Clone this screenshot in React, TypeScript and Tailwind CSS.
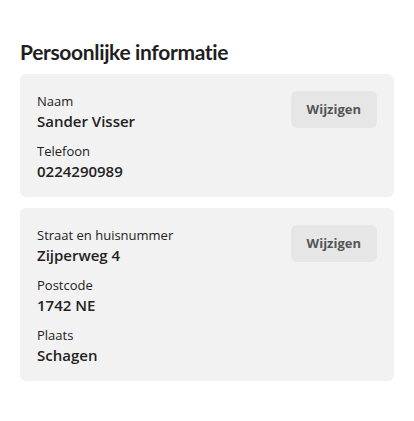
const fields1 = [
  { label: "Naam", value: "Sander Visser" },
  { label: "Telefoon", value: "0224290989" },
];

const fields2 = [
  { label: "Straat en huisnummer", value: "Zijperweg 4" },
  { label: "Postcode", value: "1742 NE" },
  { label: "Plaats", value: "Schagen" },
];

function InfoCard({ fields }: { fields: { label: string; value: string }[] }) {
  return (
    <div className="flex items-start justify-between rounded-md bg-[#f2f2f2] pt-[17px] pr-[17px] pb-[16px] pl-[17px]">
      <div className="flex flex-col gap-[10px]">
        {fields.map((f) => (
          <div key={f.label} className="flex flex-col">
            <span className="text-[13px] leading-5 text-[#222]">{f.label}</span>
            <span className="text-[15px] leading-5 font-semibold text-[#222]">{f.value}</span>
          </div>
        ))}
      </div>
      <button
        type="button"
        className="h-[37px] rounded-md bg-[#e6e6e6] px-4 text-[13px] font-bold text-[#555]"
      >
        Wijzigen
      </button>
    </div>
  );
}

export default function App() {
  return (
    <div
      className="min-h-[421px] bg-white px-5 pt-[38px]"
      style={{ fontFamily: '"Open Sans", "Noto Sans", sans-serif' }}
    >
      <h1 className="font-['Lato',sans-serif] text-[21px] leading-7 font-bold tracking-[-0.35px] text-[#1f1f1f]">
        Persoonlijke informatie
      </h1>
      <div className="mt-2 flex flex-col gap-[11px]">
        <InfoCard fields={fields1} />
        <InfoCard fields={fields2} />
      </div>
    </div>
  );
}
